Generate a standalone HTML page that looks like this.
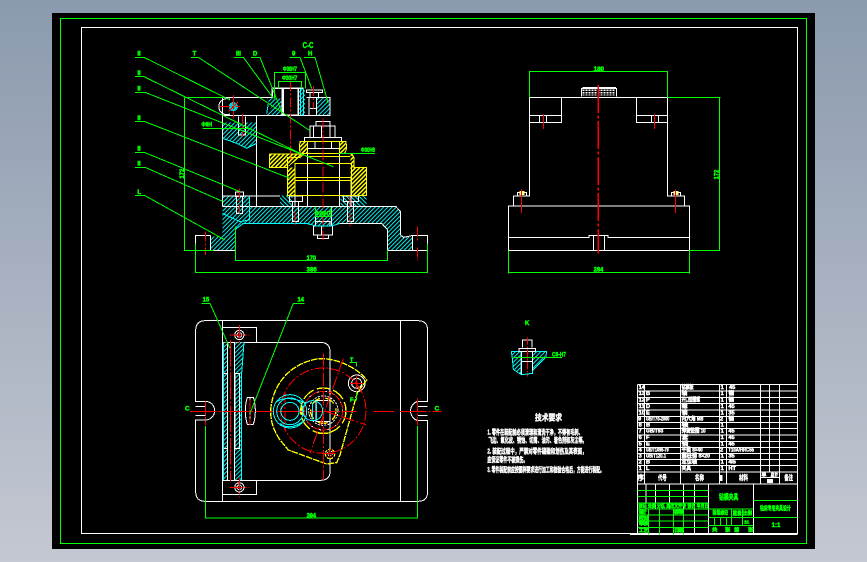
<!DOCTYPE html>
<html><head><meta charset="utf-8"><style>
html,body{margin:0;padding:0;width:867px;height:562px;overflow:hidden;background:linear-gradient(180deg,#8b9aae 0%,#c4c8d2 100%)}
svg{position:absolute;left:0;top:0}
.w{stroke:#fff;fill:none;stroke-width:3}
.g{stroke:#0f0;fill:none;stroke-width:3}
.y{stroke:#ff0;fill:none;stroke-width:3}
.r{stroke:#f00;fill:none;stroke-width:3}
.c{stroke:#0ff;fill:none;stroke-width:3}
text{font-family:"Liberation Sans","Noto Sans CJK SC",sans-serif;font-weight:bold}
.tg{fill:#0f0;stroke:#0f0;stroke-width:1.6}
.tw{fill:#fff;stroke:#fff;stroke-width:1.4}
</style></head><body>
<svg width="867" height="562" viewBox="0 0 867 562" shape-rendering="crispEdges">
<defs>
<pattern id="hc" width="9" height="9" patternUnits="userSpaceOnUse" patternTransform="rotate(45)"><rect width="9" height="9" fill="#000"/><rect width="3.5" height="9" fill="#0ee"/></pattern>
<pattern id="hc2" width="9" height="9" patternUnits="userSpaceOnUse" patternTransform="rotate(-45)"><rect width="9" height="9" fill="#000"/><rect width="3.5" height="9" fill="#0ee"/></pattern>
<pattern id="hy" width="9" height="9" patternUnits="userSpaceOnUse" patternTransform="rotate(45)"><rect width="9" height="9" fill="#000"/><rect width="4" height="9" fill="#ff0"/></pattern>
</defs>
<rect x="52" y="13" width="763" height="536" fill="#000"/>
<rect x="60.5" y="18.5" width="746" height="525" fill="none" stroke="#0f0" stroke-width="1"/>
<rect x="81.5" y="27.5" width="716" height="506" fill="none" stroke="#fff" stroke-width="1"/>

<!-- FRONT SECTION -->
<g transform="translate(130,40) scale(.33333)">
 <path fill="url(#hc)" d="M277 500H798L812 515V585L820 592L848 590V632H773V570L755 550H630L605 558H557L530 550H340L316 568V632H241V590H270L277 580Z"/>
 <path fill="url(#hc)" d="M277 470H358V545L330 545L277 520Z"/>
 <path fill="url(#hc2)" d="M450 466H488V500H450Z M632 466H710V500H632Z"/>
 <path fill="url(#hc)" d="M277 248H380V310L350 325L320 310L277 295Z"/>
 <path fill="url(#hc)" d="M410 175H457V226H410L425 200Z M505 145H525V226H505Z M560 172H600V226H560Z"/>
 <path fill="url(#hy)" d="M418 342H518L510 352L472 382H418Z M662 342H672V382H710V466H662Z M472 382H495V466H472Z M510 305H533V340H514L508 322Z M628 305H650V325L645 340H628Z"/>
 <circle cx="310" cy="200" r="14" fill="#0cc"/>
 <g class="w">
  <path d="M277 172H430M277 172V500M380 226V500M277 226H600V172H530M277 468H450M277 500H798L812 515V585L820 592L832 590L848 586H893V632H773V570L755 550H630M340 550H530M340 550L316 568V632H196V586H241M241 586V632M848 586V632"/>
  <path d="M427 172V145H520M457 145H505V225H457Z" style="stroke-width:4"/>
  <path d="M530 150H578V158H530ZM540 158V172H566V158M537 172V226H560V172M540 205H560"/>
  <path d="M558 245H600V258H558ZM540 258H615V292H540ZM575 258V292M523 292H635V305H523ZM550 292V258M600 258V292"/>
  <path d="M533 325H628V500H533ZM533 305H628M555 305V325M605 305V325"/>
  <path d="M316 456H340V470H316ZM320 470V520H337V470"/>
  <path d="M478 468H518V485H478ZM488 485V545H505V485M640 468H685V485H640ZM652 485V545H670V485"/>
  <path d="M550 558H608V585H550ZM562 585H596V595H562ZM575 558V585M557 545H600V558H557"/>
  <path d="M326 230V285H346V230"/>
  <path d="M530 500H557V558M605 500V558M460 145V225"/>
  <path d="M300 178A24 24 0 1 0 300 222"/>
  <path d="M495 412V500M663 412V500"/>
 </g>
 <g class="c">
  <path d="M358 470V540L330 545L277 520M316 568L340 550H530L557 558H605L630 550"/>
  <path d="M278 295L320 310L350 325L380 310M415 190L410 220M520 145V226M512 145V226"/>
 </g>
 <g class="y">
  <path d="M418 342H520L510 352H472V466H495M495 370H665V466H495ZM495 412H665V422H495ZM510 305H648L650 325L645 340H510L508 322ZM533 305V340M628 305V340M628 340H662L672 352V382H710V466H662M418 342V382H472M530 350H660M500 466H660"/>
 </g>
 <g class="r">
  <path d="M481 125V360M579 235V600M310 165V235M270 200H330M337 222V290M328 445V520M226 574V645M862 560V605M862 622V662M660 470V565M495 515V555M550 138V205" stroke-dasharray="30 6 6 6"/>
  <path d="M296 214L324 186"/>
 </g>
 <g class="g">
  <path d="M15 52H42L300 180M183 52H205L540 272M312 52H340L430 175M363 52H390L455 215M478 52H510L545 145M522 52H555L595 190"/>
  <path d="M15 110H42L510 340M15 157H45L610 380M15 245H45L480 415M15 338H45L330 455M15 382H45L280 485M15 467H45L285 600"/>
  <path d="M163 172H280M163 172V632H250M433 175V97H527V145M445 145V124H515V145M217 265H365M625 340H735"/>
  <path d="M316 560V662H773V630M196 610V697H893V610"/>
  <path d="M557 500V530H603V500"/>
 </g>
 <g class="tg" font-size="18">
  <text x="22" y="47">II</text><text x="188" y="47">T</text><text x="318" y="47">III</text>
  <text x="369" y="47">D</text><text x="486" y="47">9</text><text x="534" y="47">H</text>
  <text x="22" y="105">II</text><text x="22" y="152">II</text><text x="22" y="240">II</text><text x="22" y="332">II</text><text x="22" y="377">II</text><text x="22" y="462">L</text>
  <text x="518" y="24" font-size="24" textLength="32" lengthAdjust="spacingAndGlyphs">C-C</text>
  <text x="459" y="93" font-size="20" textLength="42" lengthAdjust="spacingAndGlyphs">Φ38H7</text>
  <text x="456" y="120" font-size="20" textLength="46" lengthAdjust="spacingAndGlyphs">Φ30H7</text>
  <text x="214" y="260" font-size="20" textLength="32" lengthAdjust="spacingAndGlyphs">Φ8H</text>
  <text x="693" y="336" font-size="20" textLength="42" lengthAdjust="spacingAndGlyphs">Φ30H6</text>
  <text x="556" y="526" font-size="20" textLength="46" lengthAdjust="spacingAndGlyphs">Φ26H7</text>
  <text x="530" y="660" font-size="18" textLength="28" lengthAdjust="spacingAndGlyphs">170</text>
  <text x="530" y="695" font-size="18" textLength="30" lengthAdjust="spacingAndGlyphs">386</text>
  <text transform="translate(162,416) rotate(-90)" font-size="18" textLength="30" lengthAdjust="spacingAndGlyphs">172</text>
 </g>
</g>

<!-- RIGHT VIEW -->
<g transform="translate(490,60) scale(.33333)">
 <g class="w">
  <path d="M119 112H532V408H534L584 408V438M119 112V408H70V438M214 112V187H119M119 166H214M149 166V187M170 166V187"/>
  <path d="M439 112V187H532M439 166H532M484 166V187M505 166V187"/>
  <path d="M55 438H598V571H55ZM55 532H297V526H354V532H598M310 526V571M343 526V571"/>
  <path d="M82 408V397H110V408M544 408V397H572V408"/>
  <path d="M274 110V85H380V110M277 82H378"/>
  <path d="M278 91H376M278 98H376M278 105H376" stroke-dasharray="5 4" style="stroke-width:4"/>
 </g>
 <rect x="88" y="393" width="16" height="12" fill="#ff8"/><rect x="550" y="393" width="16" height="12" fill="#ff8"/>
 <g class="r">
  <path d="M325 75V580" stroke-dasharray="84 8 8 8" style="stroke-width:3.5"/>
  <path d="M160 162V207M493 162V207M94 388V459M556 388V459"/>
 </g>
 <g class="g">
  <path d="M118 112V34H533V112M532 112H692M688 112V571H598M55 571V640M598 571V640M55 637H598"/>
 </g>
 <g class="tg">
  <text x="311" y="33" font-size="20" textLength="31" lengthAdjust="spacingAndGlyphs">180</text>
  <text x="311" y="635" font-size="20" textLength="29" lengthAdjust="spacingAndGlyphs">284</text>
  <text transform="translate(686,358) rotate(-90)" font-size="20" textLength="29" lengthAdjust="spacingAndGlyphs">172</text>
 </g>
</g>

<!-- TOP VIEW -->
<g transform="translate(170,290) scale(.33333)">
 <g class="w">
  <path d="M106 92H744Q773 92 773 122V334H744A30 30 0 0 0 744 392H773V605Q773 634 744 634H106Q77 634 77 605V390H106A28 28 0 0 0 106 334H77V122Q77 92 106 92Z"/>
  <path d="M77 350H106M77 377H106M744 350H773M744 377H773"/>
  <path d="M157 92V634M691 92V634M157 112H260V157M157 613H260V571M157 157H450Q480 157 480 185V545Q480 571 450 571H157"/>
  <circle cx="208" cy="135" r="14"/><circle cx="208" cy="135" r="7"/><circle cx="208" cy="592" r="14"/><circle cx="208" cy="592" r="7"/>
  <path d="M232 322H250Q256 340 256 362Q256 385 250 403H232Q226 385 226 362Q226 340 232 322ZM240 322V403"/>
  <circle cx="560" cy="280" r="25"/><circle cx="560" cy="280" r="15"/>
  <circle cx="460" cy="362" r="58" stroke-dasharray="8 4"/><circle cx="460" cy="362" r="44" stroke-dasharray="6 4"/>
  <path d="M438 332H480V395H438Z"/><circle cx="480" cy="490" r="7" stroke-dasharray="4 3"/>
 </g>
 <path fill="url(#hc)" d="M160 157H172V570H160Z M195 157H222L215 250V475L215 570H195Z"/>
 <path class="w" d="M195 250V475H208V250Z M160 250H172M160 475H172M172 157V570M193 157V570"/>
 <path class="c" d="M222 157L215 250V475L215 570M160 157V570"/>
 <g class="y" style="stroke-width:4">
  <path d="M302 362C305 300 345 225 440 207C490 200 560 230 590 270L562 308L510 495L500 518L470 522L355 480L330 450C310 420 302 395 302 362Z" stroke-dasharray="20 3"/>
  <circle cx="460" cy="362" r="68" stroke-dasharray="40 10"/><circle cx="480" cy="492" r="14" stroke-dasharray="8 4"/>
  <path d="M395 345V375M445 430H475"/><circle cx="460" cy="362" r="38" stroke-dasharray="30 16"/>
 </g>
 <g class="r">
  <circle cx="460" cy="362" r="128" stroke-dasharray="30 6 6 6"/>
  <circle cx="460" cy="362" r="58" stroke-dasharray="20 6" />
  <path d="M60 364H310M320 364H560M610 364H672M690 364H815M181 150V575" stroke-dasharray="80 6 6 6"/>
  <path d="M460 190V570M178 135H238M208 105V165M178 592H238M208 562V622M345 305V420M520 205L420 490M460 362L590 405M540 280H585M560 255V308M466 490H496M480 475V505M240 328V405M106 335V405M743 325V405" stroke-dasharray="40 6 6 6"/>
 </g>
 <g class="c">
  <circle cx="360" cy="364" r="50"/><circle cx="360" cy="364" r="40"/><circle cx="360" cy="364" r="27"/>
  <circle cx="428" cy="362" r="30"/><path d="M428 338V388M440 340V386"/>
  <path d="M320 335Q350 315 405 338M330 400Q360 425 405 390" />
 </g>
 <g class="g">
  <path d="M94 40H120L180 175M404 40H370L240 370M106 408V684H743V408"/>
  <path d="M538 217H560V230M540 330H560V305"/>
 </g>
 <g class="tg">
  <text x="98" y="34" font-size="18">15</text><text x="382" y="34" font-size="18">14</text>
  <text x="45" y="362" font-size="19">C</text><text x="794" y="362" font-size="19">C</text>
  <text x="410" y="682" font-size="18" textLength="28" lengthAdjust="spacingAndGlyphs">394</text>
  <text x="540" y="214" font-size="16">T</text><text x="540" y="334" font-size="16">F</text>
 </g>
</g>

<!-- DETAIL + NOTES -->
<g transform="translate(480,310) scale(.33333)">
 <path fill="url(#hc)" d="M94 124H200L190 150L157 180L125 193L100 175Z"/>
 <rect x="125" y="124" width="32" height="70" fill="#000"/>
 <g class="c"><path d="M94 124H200L197 142L157 182V190L135 193H123L100 178L97 145ZM123 124V193"/></g>
 <g class="w"><path d="M127 112V90H156V112M117 115H167V124H117ZM125 124V193M158 124V182M125 155H158"/></g>
 <path class="r" d="M142 82V200" stroke-dasharray="22 5 5 5"/>
 <path class="g" d="M100 142H246"/>
 <g class="tg">
  <text x="135" y="45" font-size="18">K</text>
  <text x="216" y="140" font-size="20" textLength="42" lengthAdjust="spacingAndGlyphs">C6-H7</text>
 </g>
 <g class="tw" font-size="21">
  <text x="165" y="332" font-size="26" textLength="81" lengthAdjust="spacingAndGlyphs">技术要求</text>
  <text x="22" y="373" textLength="286" lengthAdjust="spacingAndGlyphs">1. 零件在装配前必须清理和清洗干净，不得有毛刺、</text>
  <text x="25" y="397" textLength="295" lengthAdjust="spacingAndGlyphs">飞边、氧化皮、锈蚀、切屑、油污、着色剂和灰尘等。</text>
  <text x="22" y="431" textLength="298" lengthAdjust="spacingAndGlyphs">2. 装配过程中，严禁对零件磕碰和划伤及其表面，</text>
  <text x="22" y="456" textLength="120" lengthAdjust="spacingAndGlyphs">应保证零件不被损伤。</text>
  <text x="22" y="486" textLength="350" lengthAdjust="spacingAndGlyphs">3. 零件装配前应按图样要求进行加工和检验合格后，方能进行装配。</text>
 </g>
</g>

<!-- TITLE BLOCK -->
<g transform="translate(630,375) scale(.33333)">
 <g class="w">
  <path d="M22 29H502M22 48H502M22 67H502M22 86H502M22 105H502M22 124H502M22 142H502M22 161H502M22 180H502M22 199H502M22 217H502M22 236H502M22 254H502M22 272H502M22 291H502M22 327H502M0 478H503"/>
  <path d="M22 29V478M43 29V327M152 29V327M268 29V327M290 29V327M391 29V327M418 29V291M448 29V327M391 307H448"/>
  <path d="M48 327V402M76 327V402M118 327V402M160 327V478M193 327V478M235 327V478M370 327V478"/>
 </g>
 <rect x="268" y="300" width="10" height="18" fill="#fff"/><rect x="411" y="312" width="18" height="12" fill="#fff"/>
 <g class="g">
  <path d="M22 346H235M22 365H235M22 384H235M22 402H370M22 420H235M22 438H235M22 457H235"/>
  <path d="M55 402V478M88 402V478M130 402V478M160 402V478M370 376H502M370 427H502M235 427H370M235 451H370M253 427V451M271 427V451M290 427V451M305 402V451M338 402V451"/>
 </g>
 <g class="tw" font-size="17">
  <text x="26" y="42">14</text><text x="26" y="60">13</text><text x="26" y="80">12</text><text x="26" y="99">11</text><text x="26" y="118">10</text><text x="24" y="136">9</text><text x="26" y="154">8</text><text x="26" y="173">7</text><text x="26" y="192">6</text><text x="26" y="211">5</text><text x="26" y="229">4</text><text x="26" y="248">3</text><text x="26" y="266">2</text><text x="26" y="285">1</text>
  <text x="48" y="60">B</text><text x="48" y="80">P</text><text x="48" y="99">D</text><text x="48" y="118">E</text>
  <text x="48" y="136" textLength="70" lengthAdjust="spacingAndGlyphs">GB/T70-2000</text><text x="48" y="154">B</text>
  <text x="48" y="173" textLength="52" lengthAdjust="spacingAndGlyphs">GB/T93</text><text x="48" y="192">F</text><text x="48" y="211">E</text>
  <text x="48" y="229" textLength="68" lengthAdjust="spacingAndGlyphs">GB/T1096-79</text><text x="48" y="248" textLength="60" lengthAdjust="spacingAndGlyphs">GB/T120.1</text><text x="48" y="266">B</text><text x="48" y="285">L</text>
  <text x="155" y="42" textLength="36" lengthAdjust="spacingAndGlyphs">钻模板</text><text x="155" y="60">轴</text>
  <text x="155" y="80" textLength="55" lengthAdjust="spacingAndGlyphs">开口垫圈螺</text><text x="155" y="99" textLength="18" lengthAdjust="spacingAndGlyphs">螺</text><text x="155" y="118" textLength="18" lengthAdjust="spacingAndGlyphs">销</text>
  <text x="155" y="136" textLength="65" lengthAdjust="spacingAndGlyphs">内六角 M8</text><text x="155" y="154" textLength="20" lengthAdjust="spacingAndGlyphs">轴</text>
  <text x="155" y="173" textLength="72" lengthAdjust="spacingAndGlyphs">弹簧垫圈 10</text><text x="155" y="192" textLength="20" lengthAdjust="spacingAndGlyphs">套</text><text x="155" y="211" textLength="20" lengthAdjust="spacingAndGlyphs">销</text>
  <text x="155" y="229" textLength="63" lengthAdjust="spacingAndGlyphs">平键 8×40</text><text x="155" y="248" textLength="85" lengthAdjust="spacingAndGlyphs">圆柱销 8×20</text><text x="155" y="266" textLength="46" lengthAdjust="spacingAndGlyphs">定位轴</text><text x="155" y="285" textLength="28" lengthAdjust="spacingAndGlyphs">夹具</text>
  <text x="272" y="42">1</text><text x="272" y="60">1</text><text x="272" y="80">1</text><text x="272" y="99">1</text><text x="272" y="118">1</text><text x="270" y="136">2</text><text x="272" y="154">1</text><text x="272" y="173">1</text><text x="272" y="192">1</text><text x="272" y="211">1</text><text x="270" y="229">2</text><text x="272" y="248">1</text><text x="272" y="266">1</text><text x="272" y="285">1</text>
  <text x="297" y="42">45</text><text x="295" y="60">钢</text><text x="295" y="80">钢</text><text x="295" y="99">45</text><text x="295" y="118">35</text><text x="295" y="136">钢</text>
  <text x="295" y="173">45</text><text x="295" y="192">45</text><text x="295" y="211">45</text>
  <text x="295" y="229" textLength="77" lengthAdjust="spacingAndGlyphs">T10A/HRC55</text><text x="295" y="248">35</text><text x="295" y="266" textLength="23" lengthAdjust="spacingAndGlyphs">45</text><text x="295" y="285" textLength="23" lengthAdjust="spacingAndGlyphs">HT</text>
  <text x="22" y="315" font-size="20">序</text><text x="84" y="315" font-size="20" textLength="26" lengthAdjust="spacingAndGlyphs">代号</text><text x="195" y="315" font-size="20" textLength="27" lengthAdjust="spacingAndGlyphs">名称</text><text x="327" y="315" font-size="20" textLength="27" lengthAdjust="spacingAndGlyphs">材料</text><text x="463" y="315" font-size="20" textLength="26" lengthAdjust="spacingAndGlyphs">备注</text>
  <text x="394" y="304" font-size="15">单</text><text x="422" y="304" font-size="15" textLength="22" lengthAdjust="spacingAndGlyphs">总计</text>
 </g>
 <g class="tg" font-size="17">
  <text x="267" y="373" font-size="22" textLength="58" lengthAdjust="spacingAndGlyphs">钻模夹具</text>
  <text x="390" y="407" font-size="18" textLength="92" lengthAdjust="spacingAndGlyphs">钻床专用夹具设计</text>
  <text x="425" y="456" font-size="18">1:1</text>
  <text x="26" y="397" font-size="15" textLength="210" lengthAdjust="spacingAndGlyphs">标记 处数 分区 更改文件号 签名 年月日</text>
  <text x="26" y="416" font-size="16" textLength="24">设计</text><text x="26" y="435" font-size="16" textLength="30">校对</text><text x="26" y="450" font-size="16" textLength="30">审核</text><text x="26" y="471" font-size="16" textLength="30">工艺</text>
  <text x="132" y="416" font-size="16" textLength="30">标准</text><text x="132" y="471" font-size="16" textLength="28">日期</text>
  <text x="248" y="419" font-size="16" textLength="46" lengthAdjust="spacingAndGlyphs">阶段标记</text><text x="308" y="420" font-size="16" textLength="58" lengthAdjust="spacingAndGlyphs">重量 比例</text>
  <text x="342" y="446" font-size="15" textLength="16">1:1</text>
  <text x="246" y="470" font-size="16">共</text><text x="285" y="470" font-size="16">张</text><text x="312" y="470" font-size="16">第</text><text x="354" y="470" font-size="16">张</text>
 </g>
</g>
</svg>
</body></html>
